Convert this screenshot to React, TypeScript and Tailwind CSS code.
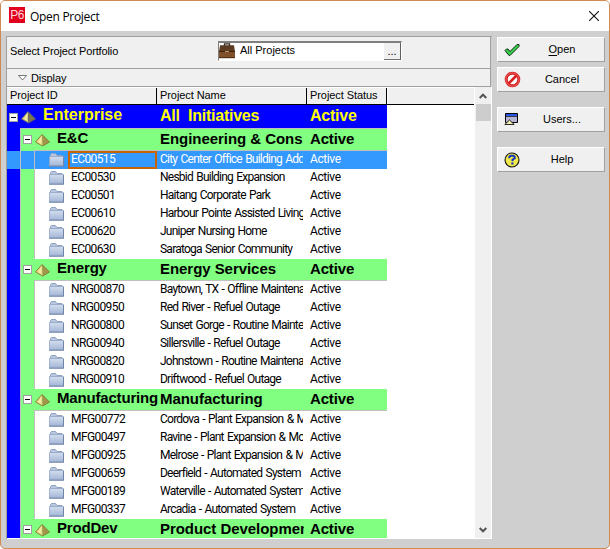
import type { ReactNode } from "react";

type Project = { id: string; name: string };

type Group = { title: string; name: string; projects: Project[] };

const groups: Group[] = [
  {
    title: "E&C",
    name: "Engineering & Cons",
    projects: [
      { id: "EC00515", name: "City Center Office Building Add" },
      { id: "EC00530", name: "Nesbid Building Expansion" },
      { id: "EC00501", name: "Haitang Corporate Park" },
      { id: "EC00610", name: "Harbour Pointe Assisted Living" },
      { id: "EC00620", name: "Juniper Nursing Home" },
      { id: "EC00630", name: "Saratoga Senior Community" },
    ],
  },
  {
    title: "Energy",
    name: "Energy Services",
    projects: [
      { id: "NRG00870", name: "Baytown, TX - Offline Maintena" },
      { id: "NRG00950", name: "Red River - Refuel Outage" },
      { id: "NRG00800", name: "Sunset Gorge - Routine Mainte" },
      { id: "NRG00940", name: "Sillersville - Refuel Outage" },
      { id: "NRG00820", name: "Johnstown - Routine Maintena" },
      { id: "NRG00910", name: "Driftwood - Refuel Outage" },
    ],
  },
  {
    title: "Manufacturing",
    name: "Manufacturing",
    projects: [
      { id: "MFG00772", name: "Cordova - Plant Expansion & M" },
      { id: "MFG00497", name: "Ravine - Plant Expansion & Mo" },
      { id: "MFG00925", name: "Melrose - Plant Expansion & M" },
      { id: "MFG00659", name: "Deerfield - Automated System" },
      { id: "MFG00189", name: "Waterville - Automated System" },
      { id: "MFG00337", name: "Arcadia - Automated System" },
    ],
  },
  { title: "ProdDev", name: "Product Developmen", projects: [] },
];

const selectedId = "EC00515";

const App = () => {
  return (
    <div className="w-[610px] h-[549px] bg-white overflow-hidden font-['Liberation_Sans',Arial,sans-serif] text-[11px] text-black">
      <div className="w-full h-full flex flex-col rounded-[5px] border border-[#d08a50] bg-[#cfcfcf] overflow-hidden">
        <TitleBar />
        <div className="flex pl-[5px] pt-[5px]">
          <div className="w-[486px] h-[503px] flex flex-col border-l border-t border-[#a0a0a0]">
            <PortfolioBar />
            <div className="h-[18px] shrink-0 flex items-center bg-[#f0f0f0] border-b border-r border-[#a0a0a0] mr-px pl-[11px]">
              <svg width="9" height="6" viewBox="0 0 9 6" className="mt-px">
                <path d="M.5 .5h8L4.5 5z" fill="#fff" stroke="#555" strokeWidth=".8" />
              </svg>
              <span className="ml-1 mt-px tracking-[-0.1px]">Display</span>
            </div>
            <div className="flex flex-1 min-h-0 bg-white border-b border-r border-white">
              <div className="w-[467px] flex flex-col overflow-hidden">
                <TableHeader />
                <RootRow />
                {groups.map((group) => (
                  <GroupRows key={group.title} group={group} />
                ))}
              </div>
              <Scrollbar />
            </div>
          </div>
          <div className="flex flex-col pl-[5px] pt-px">
            <SideButton icon={<CheckIcon />}>
              <u className="underline-offset-2">O</u>pen
            </SideButton>
            <SideButton icon={<CancelIcon />} className="mt-[5px]">
              Cancel
            </SideButton>
            <SideButton icon={<UsersIcon />} className="mt-[15px]">
              Users...
            </SideButton>
            <SideButton icon={<HelpIcon />} className="mt-[15px]">
              Help
            </SideButton>
          </div>
        </div>
      </div>
    </div>
  );
};

export default App;

const TitleBar = () => (
  <div className="h-[30px] shrink-0 flex items-center bg-white pl-2 pr-[10px]">
    <span className="w-4 h-4 flex items-center justify-center bg-[#e2001f] text-[#fbd5d8] text-[12px] tracking-[-0.5px] -mt-[2px]">
      P6
    </span>
    <span className="ml-[5px] mt-px font-['Open_Sans','Noto_Sans',sans-serif] text-[12px] tracking-[-0.3px]">
      Open Project
    </span>
    <svg width="10" height="10" viewBox="0 0 10 10" className="ml-auto -mt-px">
      <path d="M0 0l10 10M10 0L0 10" stroke="#111" strokeWidth="1.1" />
    </svg>
  </div>
);

const PortfolioBar = () => (
  <div className="h-8 shrink-0 flex bg-[#f0f0f0] border-b border-r border-[#a0a0a0] mr-px">
    <span className="w-[211px] pl-[3px] pt-[8px] leading-[13px] tracking-[-0.13px]">
      Select Project Portfolio
    </span>
    <div className="w-[184px] h-5 mt-1 flex bg-white border-t-2 border-l border-t-[#808080] border-l-[#808080] border-r border-b border-r-white border-b-white">
      <BriefcaseIcon />
      <span className="ml-[4px] leading-[15px]">All Projects</span>
      <span className="ml-auto w-4 h-[17px] bg-[#f0f0f0] border-b border-[#707070] text-center leading-[16px]">
        ...
      </span>
      <span className="w-px bg-[#606060]" />
    </div>
  </div>
);

const TableHeader = () => (
  <div className="h-[18px] shrink-0 flex bg-[#f0f0f0] border-t border-t-white border-b border-b-black text-[11px] leading-[15px] tracking-[-0.08px]">
    <span className="w-[150px] pl-[3px] border-r border-black">Project ID</span>
    <span className="w-[150px] pl-[3px] border-r border-black">Project Name</span>
    <span className="w-20 pl-[3px] border-r border-black">Project Status</span>
    <span className="flex-1 border-l border-white" />
  </div>
);

const RootRow = () => (
  <div className="w-[380px] h-6 shrink-0 flex bg-[#0000ff] font-bold text-[16px] text-[#ffff00]">
    <div className="w-[13px] pl-[2px] pt-2">
      <Collapse />
    </div>
    <div className="flex flex-1 border-b border-[#c0c0c0]">
      <div className="w-[23px] pl-px pt-[6px]">
        <PyramidIcon dark />
      </div>
      <span className="w-[117px] leading-[19px]">Enterprise</span>
      <span className="w-[150px] leading-[21px] whitespace-pre tracking-[-0.25px]">
        All  Initiatives
      </span>
      <span className="leading-[21px] tracking-[-0.25px]">Active</span>
    </div>
  </div>
);

const GroupRows = ({ group }: { group: Group }) => (
  <>
    <div className="w-[380px] h-[22px] shrink-0 flex bg-[#80ff80] font-bold text-[15px]">
      <div className="w-[13px] bg-[#0000ff]" />
      <div className="w-px bg-[#c0c0c0]" />
      <div className="w-[13px] pl-[2px] pt-[6px]">
        <Collapse />
      </div>
      <div className="flex flex-1 border-b border-[#c0c0c0]">
        <div className="w-[23px] pl-px pt-[5px]">
          <PyramidIcon />
        </div>
        <span className="w-[102px] overflow-hidden leading-[18px] tracking-[-0.18px]">
          {group.title}
        </span>
        <span className="w-[144px] ml-px overflow-hidden whitespace-nowrap leading-5 tracking-[-0.05px]">
          {group.name}
        </span>
        <span className="ml-[6px] leading-5 tracking-[-0.15px]">Active</span>
      </div>
    </div>
    {group.projects.map((project) => (
      <ProjectRow key={project.id} project={project} selected={project.id === selectedId} />
    ))}
  </>
);

const ProjectRow = ({ project, selected }: { project: Project; selected: boolean }) => (
  <div
    className={`w-[380px] h-[18px] shrink-0 flex font-['Roboto','Liberation_Sans',sans-serif] text-[12px] leading-[17px] ${
      selected ? "bg-[#3399ff] text-white" : "bg-white"
    }`}
  >
    <div className={`w-[13px] ${selected ? "" : "bg-[#0000ff]"}`} />
    <div className="w-px bg-[#c0c0c0]" />
    <div className={`w-[13px] ${selected ? "" : "bg-[#80ff80]"}`} />
    <div className="w-px bg-[#c0c0c0]" />
    <div className="w-[33px] pl-[14px] pt-[2px]">
      <FolderIcon />
    </div>
    <span
      className={`w-[89px] tracking-[-0.6px] ${
        selected ? "border-2 border-[#c86400] pl-px leading-[13px]" : "pl-[3px]"
      }`}
    >
      {project.id}
    </span>
    <span className="w-[143px] ml-[3px] overflow-hidden whitespace-nowrap tracking-[-0.76px] [word-spacing:1px]">
      {project.name}
    </span>
    <span className="ml-[7px] tracking-[-0.4px]">Active</span>
  </div>
);

const Scrollbar = () => (
  <div className="w-4 ml-px flex flex-col items-center bg-[#f0f0f0]">
    <svg width="8" height="6" viewBox="0 0 8 6" className="mt-[6px] shrink-0">
      <path d="M.7 5L4 1.7 7.300 5" fill="none" stroke="#555" strokeWidth="2" />
    </svg>
    <div className="w-[15px] h-[17px] mt-[5px] bg-[#cdcdcd]" />
    <svg width="8" height="6" viewBox="0 0 8 6" className="mt-auto mb-[5px] shrink-0">
      <path d="M.7 1L4 4.300 7.300 1" fill="none" stroke="#555" strokeWidth="2" />
    </svg>
  </div>
);

const SideButton = ({
  icon,
  className = "",
  children,
}: {
  icon: ReactNode;
  className?: string;
  children: ReactNode;
}) => (
  <button
    className={`w-[108px] h-[25px] flex items-center bg-[#f0f0f0] border border-t-white border-l-white border-r-[#a0a0a0] border-b-[#a0a0a0] pl-[6px] ${className}`}
  >
    {icon}
    <span className="w-[82px] text-center">{children}</span>
  </button>
);

const Collapse = () => (
  <svg width="9" height="9" viewBox="0 0 9 9" shapeRendering="crispEdges">
    <path d="M.5 .5h8v8h-8z" fill="#fff" stroke="#a0a0a0" />
    <path d="M2 4h5v1H2z" fill="#000" />
  </svg>
);

const PyramidIcon = ({ dark = false }: { dark?: boolean }) => (
  <svg width="15" height="13" viewBox="0 0 15 13">
    <path d="M7 .5L.5 8l7 4z" fill={dark ? "#d9cf7c" : "#e6db83"} />
    <path d="M7 .5L14.500 8l-7 4z" fill={dark ? "#7d7648" : "#a3954a"} />
    <path d="M6.500 2L3.500 8l2 1.500z" fill="#f6f0b4" />
    <path
      d="M7 .5L.5 8l7 4 7-4z"
      fill="none"
      stroke={dark ? "#5f6070" : "#7a6a2c"}
      strokeWidth=".8"
    />
  </svg>
);

const FolderIcon = () => (
  <svg width="15" height="14" viewBox="0 0 15 14">
    <defs>
      <linearGradient id="folder" x1="0" y1="0" x2="0" y2="1">
        <stop offset="0" stopColor="#d3deee" />
        <stop offset="1" stopColor="#a3b6d6" />
      </linearGradient>
    </defs>
    <path d="M1.500 4V1.500l1-1h4l1.500 2h5v2" fill="#b9c8e0" stroke="#8fa1be" />
    <path d="M.5 3.500h14v9.500H.5z" fill="url(#folder)" stroke="#92a5c4" strokeWidth=".8" />
    <path d="M0 13.200h15M14.500 4v9" stroke="#7085a8" />
  </svg>
);

const BriefcaseIcon = () => (
  <svg width="17" height="17" viewBox="0 0 17 17">
    <path d="M5.500 3V.8h5V3" fill="none" stroke="#38291d" strokeWidth="1.3" />
    <path d="M1 2.500h14l1 6H0z" fill="#5d3c22" />
    <path d="M0 8h16v7H0z" fill="#80502b" />
    <path d="M0 8h6v1H0zM10 8h6v1h-6z" fill="#3b2312" />
    <path d="M6 8h4v1H6z" fill="#b8976f" />
    <path d="M1 3h14" stroke="#4c3827" />
    <path d="M0 14.700h16" stroke="#4b2b16" />
  </svg>
);

const CheckIcon = () => (
  <svg width="17" height="14" viewBox="0 0 17 14">
    <path
      d="M1 7.500l1.500-1.500h1.500l2 2.500L13 1.500h2v2L6 12.500H5z"
      fill="#35cf4b"
      stroke="#102b12"
      strokeWidth="1"
    />
  </svg>
);

const CancelIcon = () => (
  <svg width="17" height="17" viewBox="0 0 17 17">
    <circle cx="8.500" cy="8.500" r="6.300" fill="#fff" stroke="#d92020" strokeWidth="3" />
    <path d="M4.500 12.500l8-8" stroke="#d92020" strokeWidth="2.600" />
    <circle cx="8.500" cy="8.500" r="6.600" fill="none" stroke="#ef7272" strokeWidth=".8" />
  </svg>
);

const UsersIcon = () => (
  <svg width="17" height="13" viewBox="0 0 17 13">
    <path d="M1.500 .5h12v9h-12z" fill="#b5b5d3" stroke="#000" />
    <path d="M2 1h11v2H2z" fill="#2857e8" />
    <path d="M2 3h11v.8H2z" fill="#111" />
    <path d="M5.500 7L.8 11.500h9.400z" fill="#f2edb0" stroke="#111" strokeWidth=".9" />
  </svg>
);

const HelpIcon = () => (
  <svg width="17" height="16" viewBox="0 0 17 16">
    <circle cx="8" cy="8" r="7" fill="#f1ea4b" stroke="#111" strokeWidth="1.100" />
    <path
      d="M5.300 6.300V5l1.200-1.200h3L10.700 5v1.200L8.500 7.800v1.500"
      fill="none"
      stroke="#1133c8"
      strokeWidth="2"
    />
    <path d="M7.300 10.500h2.200v2H7.300z" fill="#1133c8" />
  </svg>
);
